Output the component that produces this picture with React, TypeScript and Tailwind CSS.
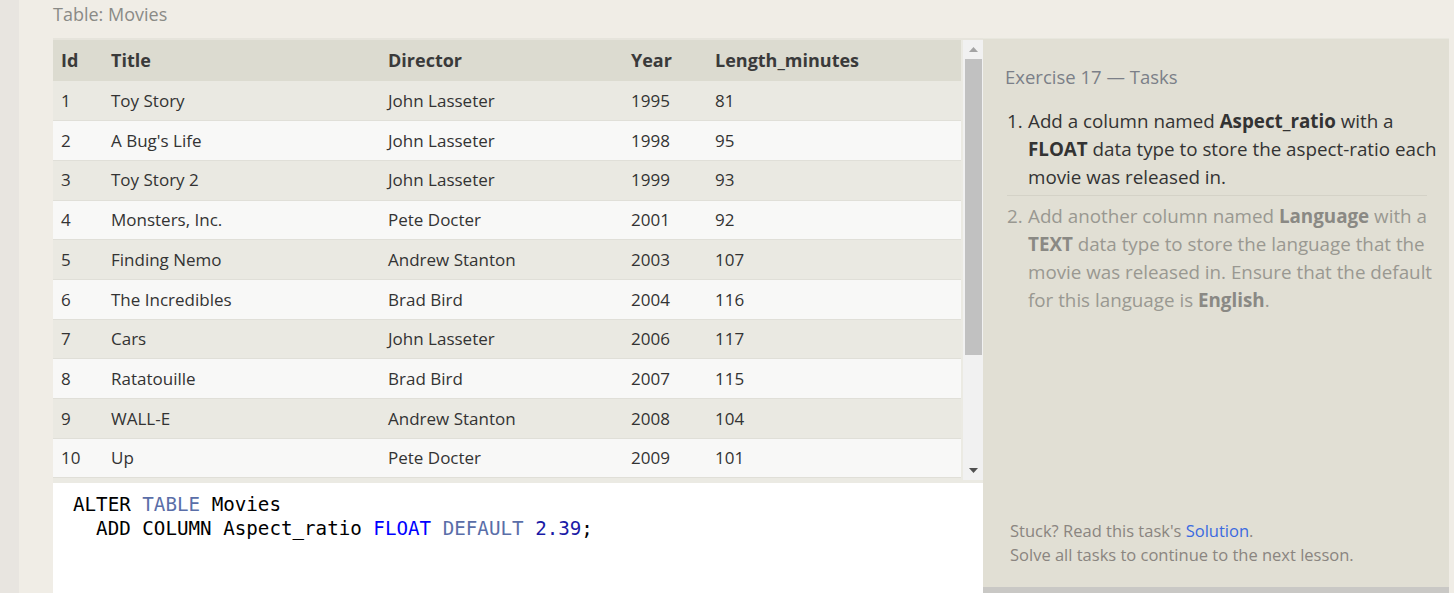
const movies = [
  [1, 'Toy Story', 'John Lasseter', 1995, 81],
  [2, "A Bug's Life", 'John Lasseter', 1998, 95],
  [3, 'Toy Story 2', 'John Lasseter', 1999, 93],
  [4, 'Monsters, Inc.', 'Pete Docter', 2001, 92],
  [5, 'Finding Nemo', 'Andrew Stanton', 2003, 107],
  [6, 'The Incredibles', 'Brad Bird', 2004, 116],
  [7, 'Cars', 'John Lasseter', 2006, 117],
  [8, 'Ratatouille', 'Brad Bird', 2007, 115],
  [9, 'WALL-E', 'Andrew Stanton', 2008, 104],
  [10, 'Up', 'Pete Docter', 2009, 101],
]

export default function App() {
  return (
    <div className="h-[593px] w-[1454px] flex overflow-hidden bg-[#f0ede6] font-['Open_Sans',sans-serif]">
      <div className="w-[19px] bg-[#e8e5e0]" />

      <div className="flex-1 pl-[34px] flex flex-col">
        <div className="h-[38px] flex items-center text-[18px] text-[#8a8a86] pb-[10px]">Table: Movies</div>

        <div className="flex flex-1">
          {/* left: table + editor */}
          <div className="w-[930px] flex flex-col bg-[#ebeae3] border-t-2 border-[#e6e4dc]">
            <div className="h-[440px] flex">
              <table className="w-[908px] h-[438px] text-[17px] text-[#333] border-collapse self-start">
                <thead>
                  <tr className="h-[41px] bg-[#dcdbd0] text-left text-[#3a3a3a] text-[18px]">
                    <th className="w-[50px] pl-[8px] font-bold">Id</th>
                    <th className="w-[277px] pl-[8px] font-bold">Title</th>
                    <th className="w-[243px] pl-[8px] font-bold">Director</th>
                    <th className="w-[84px] pl-[8px] font-bold">Year</th>
                    <th className="pl-[8px] font-bold">Length_minutes</th>
                  </tr>
                </thead>
                <tbody>
                  {movies.map((m, i) => (
                    <tr
                      key={m[0]}
                      className={`h-[39.7px] border-b border-[#e0dfd8] ${i % 2 === 0 ? 'bg-[#eae9e2]' : 'bg-[#f8f8f7]'}`}
                    >
                      {m.map((c, j) => (
                        <td key={j} className="pl-[8px]">{c}</td>
                      ))}
                    </tr>
                  ))}
                </tbody>
              </table>
              {/* scrollbar */}
              <div className="w-[20px] bg-[#f1f1f1] flex flex-col items-center ml-[2px]">
                <div className="h-[19px] flex items-center justify-center">
                  <svg width="9" height="5" viewBox="0 0 9 5"><path d="M4.5 0L9 5H0z" fill="#a3a3a3" /></svg>
                </div>
                <div className="w-[17px] h-[296px] bg-[#c1c1c1]" />
                <div className="flex-1" />
                <div className="h-[19px] flex items-center justify-center">
                  <svg width="9" height="5" viewBox="0 0 9 5"><path d="M0 0H9L4.5 5z" fill="#505050" /></svg>
                </div>
              </div>
            </div>

            <div className="flex-1 mt-[3px] bg-white pt-[10px] pl-[20px] font-['DejaVu_Sans_Mono',monospace] text-[19.2px] leading-[24px] text-black whitespace-pre">
              <div>
                ALTER <span className="text-[#5a6ea8]">TABLE</span> Movies
              </div>
              <div>
                {'  ADD COLUMN Aspect_ratio '}
                <span className="text-[#0000ff]">FLOAT</span> <span className="text-[#5a6ea8]">DEFAULT</span>{' '}
                <span className="text-[#1a1aa6]">2.39</span>;
              </div>
            </div>
          </div>

          {/* right: tasks panel */}
          <div className="w-[466px] flex flex-col bg-[#e1dfd4] border-t border-[#e8e7de]">
            <div className="flex-1 px-[22px] pt-[24px] flex flex-col">
              <div className="text-[18.5px] text-[#7b7f88] leading-[28px]">Exercise 17 — Tasks</div>
              <ol className="mt-[16px] text-[18.8px] leading-[28px]">
                <li className="flex text-[#333] pb-[4px] border-b border-[#d4d2c7] ml-[2px]">
                  <span className="w-[21px] shrink-0">1.</span>
                  <span className="whitespace-nowrap">
                    Add a column named <b>Aspect_ratio</b> with a<br />
                    <b>FLOAT</b> data type to store the aspect-ratio each<br />
                    movie was released in.
                  </span>
                </li>
                <li className="flex text-[#999891] pt-[6px] ml-[2px]">
                  <span className="w-[21px] shrink-0">2.</span>
                  <span className="whitespace-nowrap">
                    Add another column named <b className="text-[#8a8984]">Language</b> with a<br />
                    <b className="text-[#8a8984]">TEXT</b> data type to store the language that the<br />
                    movie was released in. Ensure that the default<br />
                    for this language is <b className="text-[#8a8984]">English</b>.
                  </span>
                </li>
              </ol>
              <div className="flex-1" />
              <div className="text-[16.5px] leading-[24px] text-[#8a8580] pl-[5px] pb-[20px]">
                Stuck? Read this task's <span className="text-[#3b6ae0]">Solution</span>.
                <br />
                Solve all tasks to continue to the next lesson.
              </div>
            </div>
            <div className="h-[6px] bg-[#c9c8c5]" />
          </div>
          <div className="flex-1" />
        </div>
      </div>
    </div>
  )
}
